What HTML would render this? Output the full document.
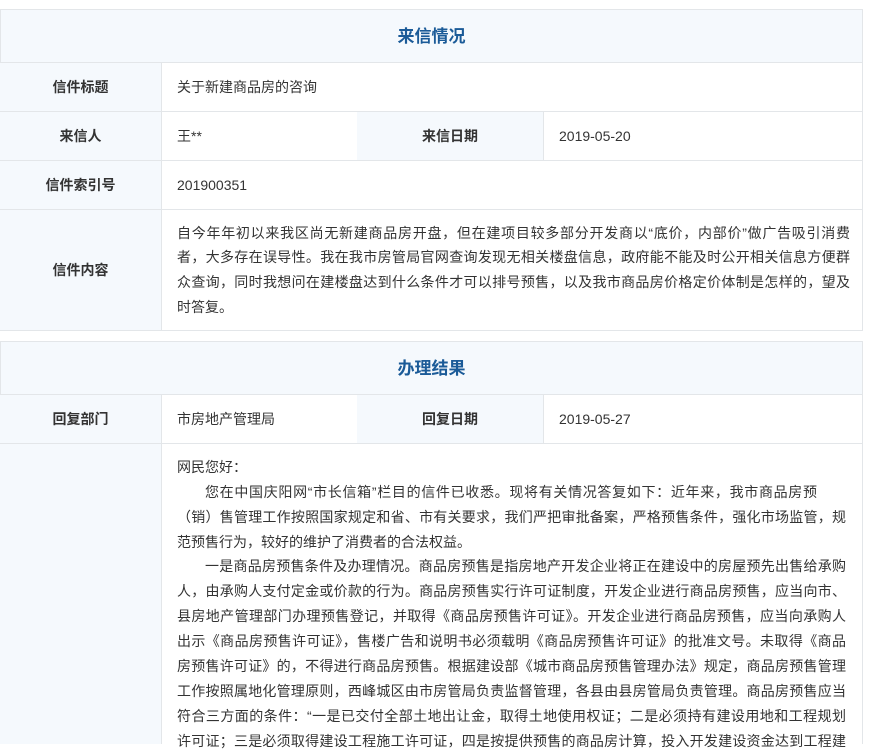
<!DOCTYPE html>
<html><head><meta charset="utf-8"><style>
*{margin:0;padding:0;box-sizing:border-box}
body{width:877px;height:738px;overflow:hidden;background:#fff;font-family:"Liberation Sans","Noto Sans CJK SC",sans-serif;font-size:14px;color:#333;position:relative}
.a{position:absolute}
.hd{background:#f5f9fd;border:1px solid #e3e6e9;color:#1b5b98;font-size:17px;font-weight:bold;text-align:center}
.lb{background:#f5f9fd;font-weight:bold;text-align:center;display:flex;align-items:center;justify-content:center;border-bottom:1px solid #e3e6e9;border-right:1px solid #e3e6e9}
.cl{display:flex;align-items:center;padding-left:16px;border-bottom:1px solid #e3e6e9;border-right:1px solid #e3e6e9}
.ln{position:absolute;left:177px;width:671px;height:25px;line-height:25px;text-align:justify;text-align-last:justify;white-space:nowrap}
.ln.e{text-align-last:left}
</style></head><body>
<div class="a hd" style="left:0;top:9px;width:863px;height:54px;line-height:53px">来信情况</div>
<div class="a lb" style="left:0;top:63px;width:162px;height:49px">信件标题</div>
<div class="a cl" style="left:161px;top:63px;width:702px;height:49px">关于新建商品房的咨询</div>
<div class="a lb" style="left:0;top:112px;width:162px;height:49px">来信人</div>
<div class="a cl" style="left:161px;top:112px;width:197px;height:49px">王**</div>
<div class="a lb" style="left:357px;top:112px;width:187px;height:49px">来信日期</div>
<div class="a cl" style="left:543px;top:112px;width:320px;height:49px">2019-05-20</div>
<div class="a lb" style="left:0;top:161px;width:162px;height:49px">信件索引号</div>
<div class="a cl" style="left:161px;top:161px;width:702px;height:49px">201900351</div>
<div class="a lb" style="left:0;top:210px;width:162px;height:121px">信件内容</div>
<div class="a" style="left:161px;top:210px;width:702px;height:121px;border-bottom:1px solid #e3e6e9;border-right:1px solid #e3e6e9"></div>
<div class="ln" style="top:221px;width:673px">自今年年初以来我区尚无新建商品房开盘，但在建项目较多部分开发商以“底价，内部价”做广告吸引消费</div>
<div class="ln" style="top:245px;width:673px">者，大多存在误导性。我在我市房管局官网查询发现无相关楼盘信息，政府能不能及时公开相关信息方便群</div>
<div class="ln" style="top:270px;width:673px">众查询，同时我想问在建楼盘达到什么条件才可以排号预售，以及我市商品房价格定价体制是怎样的，望及</div>
<div class="ln e" style="top:295px">时答复。</div>

<div class="a hd" style="left:0;top:341px;width:863px;height:54px;line-height:53px">办理结果</div>
<div class="a lb" style="left:0;top:395px;width:162px;height:49px">回复部门</div>
<div class="a cl" style="left:161px;top:395px;width:197px;height:49px">市房地产管理局</div>
<div class="a lb" style="left:357px;top:395px;width:187px;height:49px">回复日期</div>
<div class="a cl" style="left:543px;top:395px;width:320px;height:49px">2019-05-27</div>
<div class="a" style="left:0;top:444px;width:162px;height:300px;background:#f5f9fd;border-right:1px solid #e3e6e9"></div>
<div class="a" style="left:862px;top:444px;width:1px;height:300px;background:#e3e6e9"></div>
<div class="ln e" style="top:455px">网民您好：</div>
<div class="ln" style="top:480px;left:205px;width:612px">您在中国庆阳网“市长信箱”栏目的信件已收悉。现将有关情况答复如下：近年来，我市商品房预</div>
<div class="ln" style="top:505px;width:669px">（销）售管理工作按照国家规定和省、市有关要求，我们严把审批备案，严格预售条件，强化市场监管，规</div>
<div class="ln e" style="top:530px">范预售行为，较好的维护了消费者的合法权益。</div>
<div class="ln" style="top:554px;left:205px;width:641px">一是商品房预售条件及办理情况。商品房预售是指房地产开发企业将正在建设中的房屋预先出售给承购</div>
<div class="ln" style="top:579px;width:669px">人，由承购人支付定金或价款的行为。商品房预售实行许可证制度，开发企业进行商品房预售，应当向市、</div>
<div class="ln" style="top:604px;width:669px">县房地产管理部门办理预售登记，并取得《商品房预售许可证》。开发企业进行商品房预售，应当向承购人</div>
<div class="ln" style="top:629px;width:669px">出示《商品房预售许可证》，售楼广告和说明书必须载明《商品房预售许可证》的批准文号。未取得《商品</div>
<div class="ln" style="top:654px;width:669px">房预售许可证》的，不得进行商品房预售。根据建设部《城市商品房预售管理办法》规定，商品房预售管理</div>
<div class="ln" style="top:679px;width:669px">工作按照属地化管理原则，西峰城区由市房管局负责监督管理，各县由县房管局负责管理。商品房预售应当</div>
<div class="ln" style="top:704px;width:669px">符合三方面的条件：“一是已交付全部土地出让金，取得土地使用权证；二是必须持有建设用地和工程规划</div>
<div class="ln" style="top:729px;width:669px">许可证；三是必须取得建设工程施工许可证，四是按提供预售的商品房计算，投入开发建设资金达到工程建</div>
</body></html>
